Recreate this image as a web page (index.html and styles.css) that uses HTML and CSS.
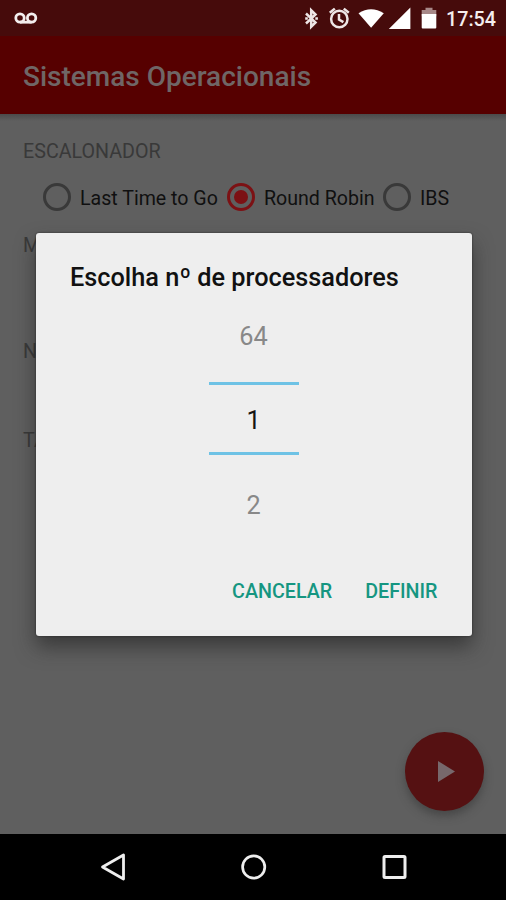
FILE: index.html
```html
<!DOCTYPE html>
<html lang="pt-BR">
<head>
<meta charset="utf-8">
<meta name="viewport" content="width=device-width">
<title>Sistemas Operacionais</title>
<link rel="stylesheet" href="styles.css">
</head>
<body>
<div class="screen">
  <header class="status">
    <svg class="voicemail" width="24" height="14" viewBox="0 0 24 14"><g fill="none" stroke="#f3eeee" stroke-width="2.800"><circle cx="6" cy="6" r="4.200"/><circle cx="17.600" cy="6" r="4.200"/><path d="M6 10.200h11.600"/></g></svg>
    <svg class="status-icons" width="136" height="26" viewBox="0 0 136 26">
      <path d="M2 8.500l9.500 9-4.300 4.200V5.300l4.300 4.200L2 18.500" fill="none" stroke="#eee6e6" stroke-width="2.500"/>
      <path d="M1.200 13.500h2.600M11.300 13.500h2.600" stroke="#eee6e6" stroke-width="2.500"/>
      <g fill="none" stroke="#eee6e6" stroke-width="2.500"><circle cx="35.300" cy="14" r="8.200"/><path d="M35 9v5.500l4.400 2.600M25.800 7.800l5-4.200M44.800 7.800l-5-4.200"/></g>
      <path d="M54.500 8.300Q67 .2 79.800 8.300L67.100 22.800z" fill="#fff"/>
      <path d="M106.400 2.500V24H84.800z" fill="#fff"/>
      <path d="M121.500 2.800h7v2.300h3.800v6.200h-14.600V5.100h3.800z" fill="#a78888"/>
      <path d="M117.700 9h14.600v13.500q0 1-1 1h-12.600q-1 0-1-1z" fill="#fff"/>
    </svg>
    <span class="clock">17:54</span>
  </header>
  <div class="appbar"><h1>Sistemas Operacionais</h1></div>
  <main class="content">
    <h2 class="label">ESCALONADOR</h2>
    <div class="radios">
      <span class="radio"></span><span class="option first">Last Time to Go</span>
      <span class="radio checked"></span><span class="option second">Round Robin</span>
      <span class="radio"></span><span class="option">IBS</span>
    </div>
    <h2 class="label cores">M</h2>
    <h2 class="label processors">N</h2>
    <h2 class="label tasks">TA</h2>
    <button class="fab" aria-label="Play"><svg width="17" height="21" viewBox="0 0 17 21"><path d="M0 0l17 10.500L0 21z" fill="#77686c"/></svg></button>
  </main>
  <nav class="nav">
    <svg width="26" height="30" viewBox="0 0 26 30"><path d="M23.500 3v24L2.500 15z" fill="none" stroke="#eee" stroke-width="2.800" stroke-linejoin="round"/></svg>
    <svg width="26" height="30" viewBox="0 0 26 30"><circle cx="12.700" cy="15" r="11.100" fill="none" stroke="#eee" stroke-width="2.700"/></svg>
    <svg width="26" height="30" viewBox="0 0 26 30"><rect x="3" y="4.500" width="21" height="21" rx="1" fill="none" stroke="#eee" stroke-width="3"/></svg>
  </nav>
  <section class="dialog">
    <h2 class="title">Escolha nº de processadores</h2>
    <div class="picker">
      <span class="number">64</span>
      <span class="number current">1</span>
      <span class="number">2</span>
    </div>
    <div class="actions"><button class="cancel">CANCELAR</button><button class="define">DEFINIR</button></div>
  </section>
</div>
</body>
</html>
```
FILE: styles.css
```css
* { box-sizing: border-box; }
body { margin: 0; font-family: Roboto, "Liberation Sans", sans-serif; }
h1, h2 { margin: 0; font-weight: 400; white-space: nowrap; }
button { border: 0; padding: 0; background: none; font: inherit; color: inherit; }
svg { display: block; flex: none; }
.screen { position: relative; display: flex; flex-direction: column; width: 506px; height: 900px; overflow: hidden; background: #5f5f5f; }
.status { display: flex; align-items: flex-start; height: 36px; padding: 5px 0 0 14px; background: #460b0b; color: #f5eeee; }
.voicemail { margin-top: 7px; }
.status-icons { margin-left: 266px; }
.clock { margin-left: 6px; padding-top: 1px; font-size: 19.7px; line-height: 28px; font-weight: 500; }
.appbar { display: flex; align-items: center; height: 78px; padding: 2px 23px 0; background: #560000; color: #6f6666; }
.appbar h1 { font-size: 28px; font-weight: 500; }
.content { position: relative; display: flex; flex-direction: column; height: 720px; padding: 27px 23px 0; background: linear-gradient(#4b4b4b, #5f5f5f 7px); }
.label { height: 22px; font-size: 19.7px; line-height: 22px; color: #393939; }
.radios { display: flex; align-items: center; height: 28px; margin: 20px 0 0 20px; }
.radio { display: flex; flex: none; align-items: center; justify-content: center; width: 28px; height: 28px; border: 3px solid #393939; border-radius: 50%; }
.checked { border-color: #7c1114; }
.checked::after { content: ""; width: 14px; height: 14px; border-radius: 50%; background: #7c1114; }
.option { margin-left: 9px; padding-top: 2px; font-size: 19.6px; color: #101010; white-space: nowrap; }
.first { width: 138px; margin-right: 9px; }
.second { width: 111px; margin-right: 8px; }
.cores { margin-top: 24px; }
.processors { margin-top: 84px; }
.tasks { margin-top: 67px; }
.fab { position: absolute; right: 22px; bottom: 23px; display: flex; align-items: center; justify-content: center; width: 79px; height: 79px; padding-left: 4px; border-radius: 50%; background: #551112; box-shadow: 0 5px 8px #30303080; }
.nav { display: flex; align-items: center; justify-content: space-between; height: 66px; padding: 0 99px 0 100px; background: #000; }
.dialog { position: absolute; left: 36px; top: 233px; display: flex; flex-direction: column; width: 435.5px; height: 402.5px; padding: 30px 34px 0 34px; border-radius: 3px; background: #eee; box-shadow: 0 0 2px #222, 0 11px 20px #2229; }
.title { height: 30px; font-size: 25.3px; line-height: 30px; font-weight: 500; color: #111; }
.picker { display: flex; flex-direction: column; align-items: center; width: 90px; margin: 25px 0 0 138.5px; }
.number { height: 38px; font-size: 25.3px; line-height: 38px; color: #888; }
.current { width: 90px; height: 73px; margin: 26px 0 32px; border: solid #6ec2e5; border-width: 3px 0; line-height: 72px; text-align: center; color: #151515; }
.actions { display: flex; justify-content: flex-end; gap: 33px; margin-top: 53px; font-size: 19.7px; line-height: 28px; font-weight: 500; color: #159681; }
```
